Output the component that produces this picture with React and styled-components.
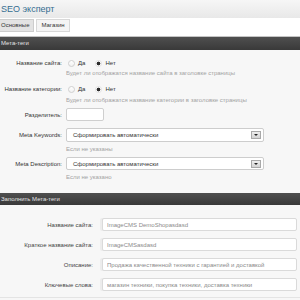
import React from "react";
import styled, { createGlobalStyle } from "styled-components";

const GlobalStyle = createGlobalStyle`
  html, body {
    margin: 0;
    padding: 0;
  }
  body {
    background: #f7f7f7;
    font-family: "Liberation Sans", Arial, sans-serif;
    overflow: hidden;
  }
`;

const Page = styled.div`
  width: 300px;
  height: 300px;
  overflow: hidden;
  background: #f7f7f7;
`;

const Header = styled.header`
  height: 18px;
  display: flex;
  align-items: center;
  padding-left: 1px;
  background: linear-gradient(#f6f6f6, #e8e8e8);
`;

const Title = styled.h1`
  margin: 0;
  font-size: 9px;
  font-weight: normal;
  line-height: 1;
  color: #356d90;
`;

const TabBar = styled.div`
  box-sizing: border-box;
  height: 19px;
  padding-top: 1px;
  background: #fff;
  border-bottom: 1px solid #c4c4c4;
`;

const TabList = styled.ul`
  display: flex;
  gap: 2px;
  margin: 0 0 0 -4px;
  padding: 0;
  list-style: none;
`;

const Tab = styled.li`
  box-sizing: border-box;
  height: 13px;
  padding: 0 4px;
  font-size: 6px;
  line-height: 11px;
  color: #333;
  border: 1px solid ${(p) => (p.$active ? "#cdcdcd" : "#d8d8d8")};
  background: ${(p) => (p.$active ? "#e3e3e3" : "#f4f4f4")};
`;

const SectionBar = styled.div`
  height: ${(p) => p.$h}px;
  line-height: ${(p) => p.$h}px;
  padding-left: 1px;
  font-size: 6px;
  color: #e4e4e4;
  background: linear-gradient(#4f4f4f, #393939);
`;

const Form = styled.div`
  padding: 7px 0 12px;
`;

const Field = styled.div`
  display: grid;
  grid-template-columns: 62px 1fr;
  column-gap: 4px;
  align-items: center;
  margin-top: ${(p) => p.$top || 0}px;
`;

const Label = styled.span`
  text-align: right;
  font-size: 6px;
  color: #333;
`;

const Hint = styled.div`
  grid-column: 2;
  margin-top: ${(p) => p.$top || 0}px;
  font-size: 6px;
  line-height: 8px;
  color: #a3a3a3;
`;

const RadioGroup = styled.div`
  display: flex;
  align-items: center;
  gap: 10px;
  height: 12px;
  padding-left: 2px;
`;

const RadioOption = styled.label`
  display: flex;
  align-items: center;
  gap: 3px;
  font-size: 6px;
  color: #333;
`;

const RadioDot = styled.span`
  box-sizing: border-box;
  width: 7px;
  height: 7px;
  border-radius: 50%;
  border: 1px solid ${(p) => (p.$checked ? "#e2e2e2" : "#d0d0d0")};
  background: ${(p) =>
    p.$checked
      ? "radial-gradient(circle, #2d2d2d 0 1.6px, #fff 2.2px)"
      : "linear-gradient(#fff, #f1f1f1)"};
`;

const SmallInput = styled.input`
  box-sizing: border-box;
  width: 38px;
  height: 13px;
  margin: 0;
  border: 1px solid #cfcfcf;
  border-radius: 2px;
  background: #fff;
`;

const SelectBox = styled.div`
  box-sizing: border-box;
  width: 198px;
  height: ${(p) => p.$h}px;
  display: flex;
  align-items: center;
  justify-content: space-between;
  padding: 0 2px 0 6px;
  border: 1px solid #cdcdcd;
  border-radius: 2px;
  background: #fff;
  font-size: 6px;
  color: #333;
`;

const ArrowButton = styled.span`
  box-sizing: border-box;
  width: 10px;
  height: 8px;
  display: flex;
  align-items: center;
  justify-content: center;
  border: 1px solid #a9a9a9;
  background: linear-gradient(#eee, #d3d3d3);

  &::after {
    content: "";
    border-left: 2px solid transparent;
    border-right: 2px solid transparent;
    border-top: 2px solid #222;
  }
`;

const Table = styled.div`
  padding-top: 9px;
  border-bottom: 1px solid #e4e4e4;
  padding-bottom: 3px;
`;

const Row = styled.div`
  display: grid;
  grid-template-columns: 93px 1fr;
  column-gap: 9px;
  align-items: center;
  padding: 4px 3px 3px 0;
`;

const RowLabel = styled.span`
  text-align: right;
  font-size: 6px;
  color: #444;
`;

const TextField = styled.input`
  box-sizing: border-box;
  width: 100%;
  height: 13px;
  margin: 0;
  padding: 0 4px;
  border: 1px solid #dadada;
  border-radius: 2px;
  background: #fff;
  font-family: inherit;
  font-size: 6px;
  color: #8a8a8a;
  box-shadow: -2px 0 0 #ececec;
`;

function Radios({ value }) {
  return (
    <RadioGroup>
      <RadioOption>
        <RadioDot $checked={value === "yes"} />
        Да
      </RadioOption>
      <RadioOption>
        <RadioDot $checked={value === "no"} />
        Нет
      </RadioOption>
    </RadioGroup>
  );
}

function Select({ h }) {
  return (
    <SelectBox $h={h}>
      Сформировать автоматически
      <ArrowButton />
    </SelectBox>
  );
}

const metaRows = [
  ["Название сайта:", "ImageCMS DemoShopasdasd"],
  ["Краткое название сайта:", "ImageCMSasdasd"],
  ["Описание:", "Продажа качественной техники с гарантией и доставкой"],
  ["Ключевые слова:", "магазин техники, покупка техники, доставка техники"],
];

export default function App() {
  return (
    <Page>
      <GlobalStyle />
      <Header>
        <Title>SEO эксперт</Title>
      </Header>
      <TabBar>
        <TabList>
          <Tab $active>Основные</Tab>
          <Tab>Магазин</Tab>
        </TabList>
      </TabBar>

      <SectionBar $h={13}>Мета-теги</SectionBar>
      <Form>
        <Field>
          <Label>Название сайта:</Label>
          <Radios value="no" />
          <Hint>Будет ли отображатся название сайта в заголовке страницы</Hint>
        </Field>
        <Field $top={6}>
          <Label>Название категории:</Label>
          <Radios value="no" />
          <Hint $top={1}>Будет ли отображатся название категории в заголовке страницы</Hint>
        </Field>
        <Field $top={4}>
          <Label>Разделитель:</Label>
          <SmallInput readOnly />
        </Field>
        <Field $top={7}>
          <Label>Meta Keywords:</Label>
          <Select h={14} />
          <Hint $top={3}>Если не указаны</Hint>
        </Field>
        <Field $top={4}>
          <Label>Meta Description:</Label>
          <Select h={13} />
          <Hint $top={3}>Если не указано</Hint>
        </Field>
      </Form>

      <SectionBar $h={12}>Заполнить Мета-теги</SectionBar>
      <Table>
        {metaRows.map(([label, value]) => (
          <Row key={label}>
            <RowLabel>{label}</RowLabel>
            <TextField readOnly value={value} />
          </Row>
        ))}
      </Table>
    </Page>
  );
}
